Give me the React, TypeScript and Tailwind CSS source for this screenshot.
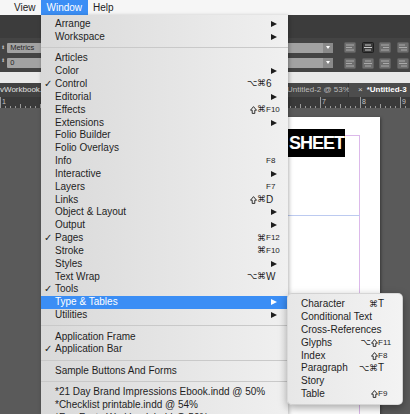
import React from 'react';

type Row =
  | { sep: true }
  | { label: string; check?: boolean; arrow?: boolean; mod?: string; k?: string; active?: boolean };

const mainRows: Row[] = [
  { label: 'Arrange', arrow: true },
  { label: 'Workspace', arrow: true },
  { sep: true },
  { label: 'Articles' },
  { label: 'Color', arrow: true },
  { label: 'Control', check: true, mod: '⌥⌘', k: '6' },
  { label: 'Editorial', arrow: true },
  { label: 'Effects', mod: '⇧⌘', k: 'F10' },
  { label: 'Extensions', arrow: true },
  { label: 'Folio Builder' },
  { label: 'Folio Overlays' },
  { label: 'Info', k: 'F8' },
  { label: 'Interactive', arrow: true },
  { label: 'Layers', k: 'F7' },
  { label: 'Links', mod: '⇧⌘', k: 'D' },
  { label: 'Object & Layout', arrow: true },
  { label: 'Output', arrow: true },
  { label: 'Pages', check: true, mod: '⌘', k: 'F12' },
  { label: 'Stroke', mod: '⌘', k: 'F10' },
  { label: 'Styles', arrow: true },
  { label: 'Text Wrap', mod: '⌥⌘', k: 'W' },
  { label: 'Tools', check: true },
  { label: 'Type & Tables', arrow: true, active: true },
  { label: 'Utilities', arrow: true },
  { sep: true },
  { label: 'Application Frame' },
  { label: 'Application Bar', check: true },
  { sep: true },
  { label: 'Sample Buttons And Forms' },
  { sep: true },
  { label: '*21 Day Brand Impressions Ebook.indd @ 50%' },
  { label: '*Checklist printable.indd @ 54%' },
  { label: '*Fun Facts Workbook.indd @ 50%' },
];

const subRows = [
  { label: 'Character', mod: '⌘', k: 'T' },
  { label: 'Conditional Text' },
  { label: 'Cross-References' },
  { label: 'Glyphs', mod: '⌥⇧', k: 'F11' },
  { label: 'Index', mod: '⇧', k: 'F8' },
  { label: 'Paragraph', mod: '⌥⌘', k: 'T' },
  { label: 'Story' },
  { label: 'Table', mod: '⇧', k: 'F9' },
];

// shift key glyph, drawn since no installed text font carries it
function ShiftGlyph() {
  return (
    <svg className="mr-[0.5px] inline-block" width="7" height="8" viewBox="0 0 7 8">
      <path d="M3.5 0.6 L6.5 4.2 L4.8 4.2 L4.8 7.4 L2.2 7.4 L2.2 4.2 L0.5 4.2 Z" fill="none" stroke="currentColor" strokeWidth="0.9" strokeLinejoin="round" />
    </svg>
  );
}

function Mods({ mod }: { mod: string }) {
  return (
    <span className="flex items-center font-['DejaVu_Sans',sans-serif] text-[9px]">
      {Array.from(mod).map((c, i) => (c === '⇧' ? <ShiftGlyph key={i} /> : <span key={i}>{c}</span>))}
    </span>
  );
}

function KeyText({ k }: { k: string }) {
  const fkey = k.length > 1 && k.startsWith('F');
  return <span className={fkey ? 'text-[8px]' : 'text-[10px]'}>{k}</span>;
}

function Arrow() {
  return (
    <span className="ml-[5px] inline-block h-0 w-0 border-y-[3px] border-l-[6px] border-y-transparent border-l-current" />
  );
}

function Separator() {
  return (
    <div className="flex h-[8.6px] items-center">
      <div className="h-px w-full bg-[#c9c9c9]" />
    </div>
  );
}

function MenuBar() {
  return (
    <div className="flex h-[15px] shrink-0 items-center bg-[#f6f6f6] pl-[8.5px] text-[10px] leading-none text-[#222]">
      <span className="flex h-full items-center px-[5.5px]">View</span>
      <span className="flex h-full items-center bg-[#3b8ef5] px-[5.5px] text-white">Window</span>
      <span className="flex h-full items-center px-[5.5px]">Help</span>
    </div>
  );
}

function Field({ text, dropdown }: { text?: string; dropdown?: boolean }) {
  return (
    <div className="flex h-[10px] items-center rounded-[1px] bg-[#a2a2a2] pl-[3px] text-[7.5px] leading-none text-[#262626]">
      <span className="flex-1">{text}</span>
      {dropdown && (
        <span className="flex h-full w-[10px] items-center justify-center bg-[#8a8a8a]">
          <span className="inline-block h-0 w-0 border-x-[2.5px] border-t-[3px] border-x-transparent border-t-white" />
        </span>
      )}
    </div>
  );
}

function AlignIcon({ selected, variant }: { selected?: boolean; variant: number }) {
  const lines = [
    [2, 10, 2, 8, 2, 10],
    [3, 9, 2, 10, 3, 9],
    [2, 10, 4, 10, 2, 10],
    [2, 8, 2, 10, 4, 10],
  ][variant % 4];
  return (
    <svg width="12" height="11" viewBox="0 0 12 11">
      <rect
        x="0.5"
        y="0.5"
        width="11"
        height="10"
        rx="1"
        fill={selected ? '#3a3a3a' : '#6e6e6e'}
        stroke={selected ? '#1e1e1e' : '#5e5e5e'}
      />
      {[0, 1, 2].map((i) => (
        <line
          key={i}
          x1={lines[i * 2]}
          x2={lines[i * 2 + 1]}
          y1={3 + i * 2.5}
          y2={3 + i * 2.5}
          stroke={selected ? '#c9c9c9' : '#a9a9a9'}
          strokeWidth="1"
        />
      ))}
    </svg>
  );
}

function ControlBar() {
  return (
    <div className="flex h-[34px] shrink-0 items-center bg-[#444444]">
      <div className="flex w-[120px] items-start pl-[1px]">
        <div className="mr-[2px] mt-[2px] flex flex-col gap-[8px] text-[5px] leading-none text-[#bbb]">
          <span>⬍</span>
          <span>⬍</span>
        </div>
        <div className="flex flex-1 flex-col gap-[5px]">
          <Field text="Metrics" />
          <Field text="0" />
        </div>
      </div>
      <div className="ml-auto flex items-center pr-[1.5px]">
        <div className="flex w-[60px] flex-col gap-[5px]">
          <Field dropdown />
          <Field dropdown />
        </div>
        <div className="ml-[11px] grid grid-cols-4 gap-x-[5.5px] gap-y-[5px]">
          {[0, 1, 2, 3, 4, 5, 6, 7].map((i) => (
            <AlignIcon key={i} variant={i} selected={i === 1} />
          ))}
        </div>
      </div>
    </div>
  );
}

function TabBar() {
  return (
    <div className="flex h-[14px] shrink-0 items-center bg-[#383838] text-[8px] leading-none">
      <div className="flex h-full w-[270px] items-center bg-[#424242]">
        <span className="w-[41px] overflow-hidden whitespace-nowrap text-[#e2e2e2]">vWorkbook.</span>
      </div>
      <div className="ml-[1px] flex h-full w-[77px] items-center whitespace-nowrap bg-[#474747] pl-[16px] text-[#bdbdbd]">
        Untitled-2 @ 53%
      </div>
      <div className="ml-[1px] flex h-full flex-1 items-center whitespace-nowrap bg-[#4d4d4d] pl-[9px] font-bold text-white">
        <span className="mr-[4px] font-normal text-[#cfcfcf]">×</span>
        *Untitled-3
      </div>
    </div>
  );
}

function Ruler() {
  const ticks = [];
  for (let x = 0; x <= 410; x += 5) {
    const major = x === 0 || x === 320 || x === 360 || x === 400;
    const h = major ? 11 : x % 20 === 0 ? 4 : 2;
    ticks.push(<line key={x} x1={x + 0.5} x2={x + 0.5} y1={11 - h} y2={11} stroke="#9a9a9a" strokeWidth="1" />);
  }
  const labels: [number, string][] = [
    [2, '1'],
    [322, '7'],
    [362, '8'],
    [402, '9'],
  ];
  return (
    <svg className="block shrink-0" width="410" height="11" viewBox="0 0 410 11">
      <rect width="410" height="11" fill="#3a3a3a" />
      {ticks}
      {labels.map(([x, t]) => (
        <text key={t} x={x} y="7" fontSize="7" fill="#c4c4c4" fontFamily="Liberation Sans, sans-serif">
          {t}
        </text>
      ))}
    </svg>
  );
}

function Canvas() {
  return (
    <div className="flex-1 overflow-hidden bg-[#5a5a5a] pt-[9px]">
      <div className="relative ml-[200px] h-[400px] w-[180px] bg-white shadow-[1px_1px_3px_rgba(0,0,0,0.4)]">
        <div className="absolute bottom-0 left-0 right-[20px] top-[18px] border-r border-t border-[#dcb9ea]" />
        <div className="absolute left-0 right-[20px] top-[98px] h-px bg-[#bccaf0]" />
        <div className="absolute right-[35px] top-[12px] flex h-[28px] w-[100px] items-center justify-end bg-black pr-[1px] text-[18px] font-bold leading-none tracking-[-1px] text-white">
          SHEET
        </div>
      </div>
    </div>
  );
}

function MainMenu() {
  return (
    <div className="absolute left-[41px] top-[15px] h-[400px] w-[247px] overflow-hidden bg-linear-to-r from-[#d9d9d9] to-[#f0f0f0] pt-[2.6px] text-[10px] leading-none shadow-[1px_1px_4px_rgba(0,0,0,0.3)]">
      {mainRows.map((r, i) =>
        'sep' in r ? (
          <Separator key={i} />
        ) : (
          <div
            key={i}
            className={`flex h-[12.85px] items-center pr-[5px] ${r.active ? 'bg-[#3b8ef5] text-white' : 'text-[#1e1e1e]'}`}
          >
            <span className="w-[14px] shrink-0 pl-[3px] font-['DejaVu_Sans',sans-serif] text-[10px]">
              {r.check ? '✓' : ''}
            </span>
            <span className="min-w-0 flex-1 whitespace-nowrap">{r.label}</span>
            {r.mod && <Mods mod={r.mod} />}
            <span className="flex w-[17px] shrink-0 items-center">
              {r.arrow ? <Arrow /> : r.k ? <KeyText k={r.k} /> : null}
            </span>
          </div>
        )
      )}
    </div>
  );
}

function SubMenu() {
  return (
    <div className="absolute left-[287px] top-[293px] w-[116px] rounded-[5px] border border-black/10 bg-linear-to-r from-[#e7e7e7] to-[#f3f3f3] py-[4px] text-[10px] leading-none text-[#1e1e1e] shadow-[0_3px_8px_rgba(0,0,0,0.35)]">
      {subRows.map((r) => (
        <div key={r.label} className="flex h-[12.8px] items-center pl-[13px] pr-[4px]">
          <span className="min-w-0 flex-1 whitespace-nowrap">{r.label}</span>
          {r.mod && <Mods mod={r.mod} />}
          <span className="flex w-[20px] shrink-0 items-center">{r.k ? <KeyText k={r.k} /> : null}</span>
        </div>
      ))}
    </div>
  );
}

export default function App() {
  return (
    <div className="relative flex h-[414px] w-[410px] flex-col overflow-hidden bg-[#5a5a5a] font-['Liberation_Sans','DejaVu_Sans',sans-serif]">
      <MenuBar />
      <div className="h-[23px] shrink-0 bg-[#3c3c3c]" />
      <ControlBar />
      <div className="h-[11px] shrink-0 bg-[#e9e9e9]" />
      <TabBar />
      <Ruler />
      <Canvas />
      <MainMenu />
      <SubMenu />
    </div>
  );
}
